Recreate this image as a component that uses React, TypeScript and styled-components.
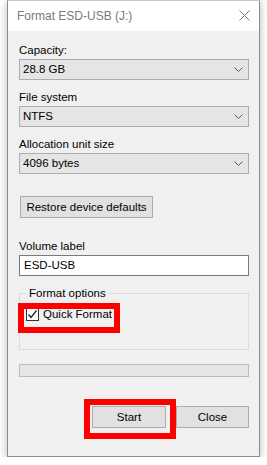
import styled, { createGlobalStyle } from 'styled-components';

const GlobalStyle = createGlobalStyle`
  html, body {
    margin: 0;
    padding: 0;
    background: #ffffff;
  }
  body {
    font-family: "Liberation Sans", Arial, sans-serif;
    font-size: 11.5px;
    color: #000;
  }
`;

function Chevron() {
  return (
    <svg width="9" height="6" viewBox="0 0 9 6">
      <path d="M0.5 0.5 L4.5 4.5 L8.5 0.5" fill="none" stroke="#5a5a5a" strokeWidth="1" />
    </svg>
  );
}

function CloseIcon() {
  return (
    <svg width="11" height="11" viewBox="0 0 11 11">
      <path d="M0.5 0.5 L10.5 10.5 M10.5 0.5 L0.5 10.5" stroke="#7a7a7a" strokeWidth="1" />
    </svg>
  );
}

function Check() {
  return (
    <svg width="11" height="11" viewBox="0 0 11 11">
      <path d="M1.5 5.5 L4 8.5 L9.5 1.5" fill="none" stroke="#222" strokeWidth="1.3" />
    </svg>
  );
}

function Combo({ value }: { value: string }) {
  return (
    <Select>
      <span>{value}</span>
      <Chevron />
    </Select>
  );
}

export default function App() {
  return (
    <>
      <GlobalStyle />
      <Window>
        <TitleBar>
          <Title>Format ESD-USB (J:)</Title>
          <CloseButton>
            <CloseIcon />
          </CloseButton>
        </TitleBar>
        <Body>
          <Label $top={11}>Capacity:</Label>
          <Combo value="28.8 GB" />
          <Label $top={9}>File system</Label>
          <Combo value="NTFS" />
          <Label $top={9}>Allocation unit size</Label>
          <Combo value="4096 bytes" />
          <RestoreButton>Restore device defaults</RestoreButton>
          <Label $top={20}>Volume label</Label>
          <TextInput>ESD-USB</TextInput>
          <GroupBox>
            <Legend>Format options</Legend>
            <CheckRow>
              <CheckBox>
                <Check />
              </CheckBox>
              <span>Quick Format</span>
            </CheckRow>
            <Highlight $left={-2} $top={9} $width={102} $height={30} />
          </GroupBox>
          <Progress />
          <ButtonRow>
            <PushButton $width={74}>Start</PushButton>
            <PushButton $width={73}>Close</PushButton>
            <Highlight $left={65} $top={-7} $width={92} $height={40} />
          </ButtonRow>
        </Body>
      </Window>
    </>
  );
}

const Window = styled.div`
  margin-left: 7px;
  width: 253px;
  height: 457px;
  box-sizing: border-box;
  border: 1px solid #8c8c8c;
  border-top-color: #c8c8c8;
  background: #f0f0f0;
  box-shadow: 0 2px 9px rgba(0, 0, 0, 0.28);
  display: flex;
  flex-direction: column;
`;

const TitleBar = styled.div`
  height: 30px;
  flex-shrink: 0;
  background: #ffffff;
  display: flex;
  align-items: center;
  justify-content: space-between;
  padding: 0 9px 0 9px;
`;

const Title = styled.div`
  color: #7a7a7a;
  font-size: 12px;
  margin-top: -1px;
`;

const CloseButton = styled.div`
  display: flex;
  margin-top: -1px;
`;

const Body = styled.div`
  padding: 0 10px 0 11px;
  display: flex;
  flex-direction: column;
  align-items: stretch;
`;

const Label = styled.div<{ $top: number }>`
  margin-top: ${(p) => p.$top}px;
  height: 16px;
  line-height: 16px;
  margin-bottom: 1px;
`;

const Select = styled.div`
  height: 21px;
  box-sizing: border-box;
  border: 1px solid #adadad;
  background: #e5e5e5;
  display: flex;
  align-items: center;
  justify-content: space-between;
  padding: 0 5px 0 3px;
  line-height: 19px;
`;

const RestoreButton = styled.div`
  margin-top: 22px;
  margin-left: 1px;
  width: 133px;
  height: 22px;
  box-sizing: border-box;
  border: 1px solid #adadad;
  background: #e1e1e1;
  display: flex;
  align-items: center;
  justify-content: center;
`;

const TextInput = styled.div`
  height: 21px;
  box-sizing: border-box;
  border: 1px solid #7a7a7a;
  background: #ffffff;
  padding: 0 4px;
  line-height: 19px;
`;

const GroupBox = styled.div`
  position: relative;
  margin-top: 17px;
  height: 57px;
  box-sizing: border-box;
  border: 1px solid #dcdcdc;
  padding: 0 6px;
`;

const Legend = styled.div`
  margin-top: -9px;
  margin-left: 1px;
  padding: 0 2px;
  width: max-content;
  background: #f0f0f0;
  line-height: 16px;
`;

const CheckRow = styled.div`
  margin-top: 6px;
  display: flex;
  align-items: center;
  gap: 4px;
  line-height: 15px;
`;

const CheckBox = styled.div`
  width: 13px;
  height: 13px;
  box-sizing: border-box;
  border: 1px solid #333333;
  background: #ffffff;
  display: flex;
  align-items: center;
  justify-content: center;
`;

const Highlight = styled.div<{ $left: number; $top: number; $width: number; $height: number }>`
  position: absolute;
  left: ${(p) => p.$left}px;
  top: ${(p) => p.$top}px;
  width: ${(p) => p.$width}px;
  height: ${(p) => p.$height}px;
  box-sizing: border-box;
  border: 6px solid #ff0000;
  pointer-events: none;
`;

const Progress = styled.div`
  margin-top: 14px;
  height: 13px;
  box-sizing: border-box;
  border: 1px solid #bcbcbc;
  background: #e6e6e6;
`;

const ButtonRow = styled.div`
  position: relative;
  margin-top: 29px;
  display: flex;
  justify-content: flex-end;
  gap: 10px;
`;

const PushButton = styled.div<{ $width: number }>`
  width: ${(p) => p.$width}px;
  height: 22px;
  box-sizing: border-box;
  border: 1px solid #adadad;
  background: #e1e1e1;
  display: flex;
  align-items: center;
  justify-content: center;
`;
